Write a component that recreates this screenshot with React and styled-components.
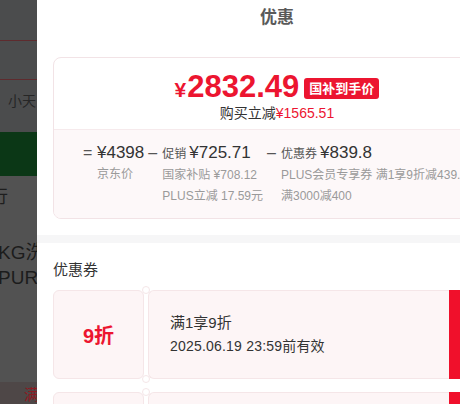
import React from 'react';
import styled, { createGlobalStyle } from 'styled-components';

const GlobalStyle = createGlobalStyle`
  html, body { margin: 0; padding: 0; background: #fff; }
  body {
    font-family: "Liberation Sans", "Noto Sans CJK SC", sans-serif;
    overflow: hidden;
  }
`;

const RED = '#ec1530';

export default function App() {
  return (
    <>
      <GlobalStyle />
      <Page>
        <Backdrop>
          <Band $h={41} $line='#5e2b2e' />
          <Band $h={39} $line='#5e2b2e' />
          <Band $h={40} $indent={8} $size={14} $color='#262626'>
            小天
          </Band>
          <Band $h={12} />
          <Band $h={44} $bg='#0b3716' />
          <Band $h={38} $bg='#525252' $indent={-10} $size={18} $color='#1e1e1e'>
            行
          </Band>
          <Band $h={22} $bg='#525252' />
          <Band $h={28} $bg='#525252' $indent={-2} $size={19} $color='#1c1c1c'>
            KG洗
          </Band>
          <Band $h={28} $bg='#525252' $indent={-2} $size={19} $color='#1c1c1c'>
            PUR
          </Band>
          <Band $h={90} $bg='#525252' />
          <Band $h={22} $bg='#4e4747' $indent={24} $size={15} $color='#8c1a22'>
            满
          </Band>
        </Backdrop>

        <Panel>
          <Header>优惠</Header>
          <CardWrap>
            <Card>
              <CardTop>
                <PriceRow>
                  <Price>
                    <Yen>¥</Yen>2832.49
                  </Price>
                  <Tag>国补到手价</Tag>
                </PriceRow>
                <Saving>
                  购买立减<em>¥1565.51</em>
                </Saving>
              </CardTop>
              <CardBottom>
                <Item>
                  <Op>=</Op>
                  <ItemBody>
                    <Main>¥4398</Main>
                    <Sub>京东价</Sub>
                  </ItemBody>
                </Item>
                <Item>
                  <Op>–</Op>
                  <ItemBody>
                    <Main>
                      <Label>促销</Label>¥725.71
                    </Main>
                    <Sub>国家补贴 ¥708.12</Sub>
                    <Sub>PLUS立减 17.59元</Sub>
                  </ItemBody>
                </Item>
                <Item>
                  <Op>–</Op>
                  <ItemBody>
                    <Main>
                      <Label>优惠券</Label>¥839.8
                    </Main>
                    <Sub>PLUS会员专享券 满1享9折减439.8</Sub>
                    <Sub>满3000减400</Sub>
                  </ItemBody>
                </Item>
              </CardBottom>
            </Card>
          </CardWrap>

          <Divider />

          <SectionTitle>优惠券</SectionTitle>
          <CouponList>
            <Coupon>
              <CouponValue>9折</CouponValue>
              <CouponInfo>
                <CouponName>满1享9折</CouponName>
                <CouponDate>2025.06.19 23:59前有效</CouponDate>
              </CouponInfo>
              <CouponAction />
              <Notch $top />
              <Notch />
            </Coupon>
            <Coupon>
              <CouponValue />
              <CouponInfo />
              <CouponAction />
              <Notch $top />
            </Coupon>
          </CouponList>
        </Panel>
      </Page>
    </>
  );
}

const Page = styled.div`
  display: flex;
  width: 460px;
  height: 404px;
  overflow: hidden;
`;

const Backdrop = styled.div`
  width: 37px;
  flex-shrink: 0;
  display: flex;
  flex-direction: column;
  background: #4b4c4d;
  overflow: hidden;
`;

const Band = styled.div`
  height: ${p => p.$h}px;
  flex-shrink: 0;
  box-sizing: border-box;
  background: ${p => p.$bg || 'transparent'};
  border-bottom: ${p => (p.$line ? `1px solid ${p.$line}` : 'none')};
  display: flex;
  align-items: center;
  padding-left: ${p => Math.max(p.$indent || 0, 0)}px;
  margin-left: ${p => Math.min(p.$indent || 0, 0)}px;
  white-space: nowrap;
  font-size: ${p => p.$size || 14}px;
  color: ${p => p.$color || '#222'};
`;

const Panel = styled.div`
  width: 480px;
  flex-shrink: 0;
  display: flex;
  flex-direction: column;
  background: #fff;

  & > * {
    flex-shrink: 0;
  }
`;

const Header = styled.div`
  height: 30px;
  display: flex;
  align-items: center;
  justify-content: center;
  font-size: 17px;
  font-weight: 700;
  color: #5a5a5a;
`;

const CardWrap = styled.div`
  padding: 0 16px;
  margin-top: 27px;
`;

const Card = styled.div`
  border: 1px solid #f2e3e6;
  border-radius: 8px;
  overflow: hidden;
`;

const CardTop = styled.div`
  height: 71px;
  box-sizing: border-box;
  padding-top: 14px;
  display: flex;
  flex-direction: column;
  align-items: center;
`;

const PriceRow = styled.div`
  display: flex;
  align-items: center;
  gap: 5px;
  height: 32px;
`;

const Price = styled.div`
  color: ${RED};
  font-size: 31px;
  font-weight: 700;
  line-height: 32px;
`;

const Yen = styled.span`
  font-size: 21px;
  margin-right: 1px;
`;

const Tag = styled.span`
  background: ${RED};
  color: #fff;
  font-size: 13px;
  font-weight: 700;
  line-height: 21px;
  padding: 0 5px;
  border-radius: 3px;
`;

const Saving = styled.div`
  font-size: 14px;
  line-height: 18px;
  color: #333;

  em {
    font-style: normal;
    color: ${RED};
  }
`;

const CardBottom = styled.div`
  border-top: 1px solid #f6eaec;
  background: #fdf8f9;
  padding: 12px 0 11px 29px;
  display: flex;
  gap: 4px;
`;

const Item = styled.div`
  display: flex;
  align-items: flex-start;
`;

const Op = styled.span`
  width: 14px;
  font-size: 16px;
  line-height: 22px;
  color: #555;
`;

const ItemBody = styled.div`
  display: flex;
  flex-direction: column;
`;

const Main = styled.div`
  font-size: 17px;
  line-height: 22px;
  color: #333;
  white-space: nowrap;
`;

const Label = styled.span`
  font-size: 12px;
  color: #555;
  margin-right: 3px;
`;

const Sub = styled.div`
  font-size: 12px;
  line-height: 21px;
  color: #9a9a9a;
  white-space: nowrap;
`;

const Divider = styled.div`
  height: 8px;
  margin-top: 16px;
  background: #f6f6f7;
`;

const SectionTitle = styled.div`
  margin-top: 17px;
  padding: 0 16px;
  font-size: 15px;
  line-height: 20px;
  color: #333;
`;

const CouponList = styled.div`
  margin-top: 10px;
  padding: 0 16px;
  display: flex;
  flex-direction: column;
  gap: 13px;
`;

const Coupon = styled.div`
  position: relative;
  display: flex;
  gap: 4px;
  height: 89px;
  flex-shrink: 0;
`;

const CouponValue = styled.div`
  width: 91px;
  box-sizing: border-box;
  background: #fdf5f6;
  border: 1px solid #f5e6e8;
  border-radius: 6px;
  display: flex;
  align-items: center;
  justify-content: center;
  color: ${RED};
  font-size: 20px;
  font-weight: 700;
`;

const CouponInfo = styled.div`
  width: 301px;
  box-sizing: border-box;
  background: #fdf5f6;
  border: 1px solid #f5e6e8;
  border-right: none;
  border-radius: 6px 0 0 6px;
  padding-left: 21px;
  display: flex;
  flex-direction: column;
  justify-content: center;
  color: #333;
`;

const CouponName = styled.div`
  font-size: 15px;
  line-height: 22px;
`;

const CouponDate = styled.div`
  font-size: 14px;
  line-height: 24px;
  letter-spacing: 0.2px;
`;

const CouponAction = styled.div`
  flex: 1;
  margin-left: -4px;
  background: #f0102b;
`;

const Notch = styled.span`
  position: absolute;
  left: 89px;
  ${p => (p.$top ? 'top: -4px;' : 'bottom: -4px;')}
  width: 8px;
  height: 8px;
  border-radius: 50%;
  background: #fff;
  border: 1px solid #f5e6e8;
  box-sizing: border-box;
`;
